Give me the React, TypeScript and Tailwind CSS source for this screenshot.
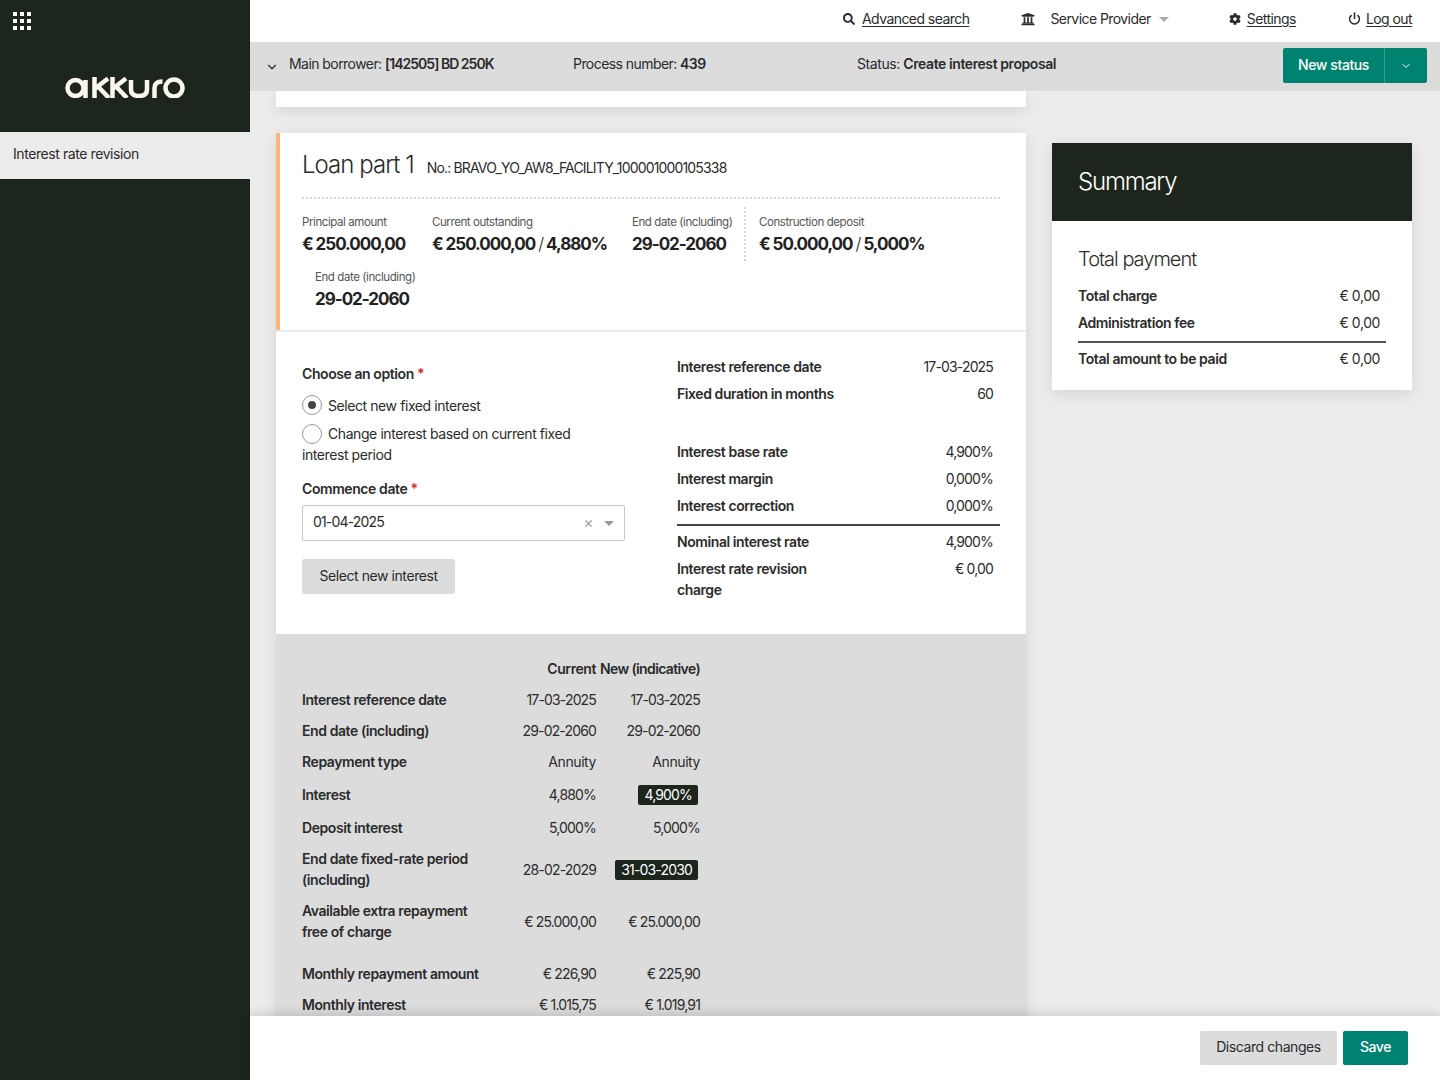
import React from "react";
import { ChevronDown, Power, X } from "lucide-react";
import { FaUniversity, FaCog, FaSearch } from "react-icons/fa";

const Logo = () => (
  <svg width="120" height="21" viewBox="0 0 120 21" fill="none" stroke="#fbf6ee" strokeWidth="4.5">
    <circle cx="10.500" cy="11" r="8" />
    <path d="M20.500 3v18" />
    <path d="M29.500 0v21M29.500 12 43 1.500M33 9.500 44 21" />
    <path d="M47.500 0v21M47.500 12 61 1.500M51 9.500 62 21" />
    <path d="M66 3v9.500c0 4.500 2.500 6.500 8 6.500s8-2 8-6.500V3" />
    <path d="M89.500 21V11c0-4.500 2.500-6.500 8-6.500" />
    <circle cx="109" cy="11" r="8.500" />
  </svg>
);

const MenuDots = () => (
  <div className="grid grid-cols-3 gap-[3px] w-[18px]">
    {Array.from({ length: 9 }).map((_, i) => (
      <span key={i} className="w-[4px] h-[4px] bg-white" />
    ))}
  </div>
);

const Stat = ({ label, children, className = "" }: { label: string; children: React.ReactNode; className?: string }) => (
  <div className={className}>
    <div className="text-[11.5px] leading-[16px] text-[#555]">{label}</div>
    <div className="text-[17px] leading-[24px] mt-[2px] font-bold text-[#222] whitespace-nowrap tracking-[-0.06em]">{children}</div>
  </div>
);

const Row = ({ label, value, className = "" }: { label: string; value: string; className?: string }) => (
  <div className={`flex justify-between pr-[7px] leading-[21px] mb-[6px] ${className}`}>
    <span className="font-semibold w-[160px]">{label}</span>
    <span className="tracking-[-0.06em]">{value}</span>
  </div>
);

const compare: [string, string, string, string?][] = [
  ["Interest reference date", "17-03-2025", "17-03-2025"],
  ["End date (including)", "29-02-2060", "29-02-2060"],
  ["Repayment type", "Annuity", "Annuity"],
  ["Interest", "4,880%", "4,900%", "h-[35px]"],
  ["Deposit interest", "5,000%", "5,000%"],
  ["End date fixed-rate period (including)", "28-02-2029", "31-03-2030", "h-[52px]"],
  ["Available extra repayment free of charge", "€ 25.000,00", "€ 25.000,00", "h-[52px]"],
  ["Monthly repayment amount", "€ 226,90", "€ 225,90", "h-[42px] [&>td]:pt-[11px]"],
  ["Monthly interest", "€ 1.015,75", "€ 1.019,91"],
];

export default function App() {
  return (
    <div
      className="flex h-screen overflow-hidden bg-[#ececec] text-[14px] text-[#2b2b2b] tracking-[-0.03em]"
      style={{ fontFamily: '"Inter", "Liberation Sans", sans-serif' }}
    >
      <aside className="w-[250px] shrink-0 bg-[#1c261c]">
        <div className="h-[132px] pl-[13px] pt-[12px]">
          <MenuDots />
          <div className="pl-[52px] mt-[47px]">
            <Logo />
          </div>
        </div>
        <div className="h-[47px] bg-[#ececec] pl-[13px] leading-[44px]">Interest rate revision</div>
      </aside>

      <div className="flex-1 flex flex-col min-w-0">
        <header className="h-[42px] bg-white flex items-center shrink-0 pb-[5px] tracking-[-0.04em]">
          <div className="flex items-center gap-[7px] ml-[593px]">
            <FaSearch size={12} />
            <span className="underline underline-offset-2">Advanced search</span>
          </div>
          <div className="flex items-center ml-[52px]">
            <FaUniversity size={14} />
            <span className="ml-[15px]">Service Provider</span>
            <span className="ml-[8px] mt-[2px] border-x-[5px] border-x-transparent border-t-[5px] border-t-[#aaa]" />
          </div>
          <div className="flex items-center gap-[6px] ml-[60px]">
            <FaCog size={12} />
            <span className="underline underline-offset-2">Settings</span>
          </div>
          <div className="flex items-center gap-[5px] ml-[52px]">
            <Power size={13} strokeWidth={3} />
            <span className="underline underline-offset-2">Log out</span>
          </div>
        </header>

        <div className="h-[49px] bg-[#dcdcdc] flex items-center shrink-0 relative z-10 pl-[15px] pb-[2px]">
          <ChevronDown size={14} strokeWidth={2} className="mt-[2px]" />
          <span className="ml-[10px] w-[284px] pb-[5px] tracking-[-0.04em]">
            Main borrower: <b className="font-semibold tracking-[-0.07em]">[142505] BD 250K</b>
          </span>
          <span className="w-[284px] pb-[5px] tracking-[-0.04em]">
            Process number: <b className="font-semibold">439</b>
          </span>
          <span className="pb-[5px]">
            Status: <b className="font-semibold">Create interest proposal</b>
          </span>
          <div className="ml-auto mr-[13px] flex h-[35px] bg-[#008270] rounded-[2px] text-white">
            <span className="w-[102px] flex items-center justify-center border-r border-[#3a9c8e] font-medium pb-[3px]">New status</span>
            <span className="w-[42px] flex items-center justify-center">
              <ChevronDown size={12} strokeWidth={2} />
            </span>
          </div>
        </div>

        <main className="flex-1 min-h-0 overflow-hidden flex gap-[26px] px-[26px] items-start">
          <div className="w-[750px] shrink-0">
            <div className="h-[16px] bg-white shadow-[0_4px_14px_rgba(0,0,0,0.1)]" />

            <section className="mt-[26px] shadow-[0_4px_14px_rgba(0,0,0,0.1)]">
              <div className="h-[197px] bg-white border-l-4 border-[#ffb374] pl-[22px] pr-[26px]">
                <div className="flex items-baseline h-[66px] border-b-2 border-dotted border-[#d5d5d5] pt-[14px]">
                  <h2 className="text-[24px] font-light tracking-[-0.04em]">Loan part 1</h2>
                  <span className="ml-[13px] tracking-[-0.06em]">No.: BRAVO_YO_AW8_FACILITY_100001000105338</span>
                </div>
                <div className="flex pt-[8px]">
                  <Stat label="Principal amount" className="w-[130px] pt-[7px]">€ 250.000,00</Stat>
                  <Stat label="Current outstanding" className="w-[200px] pt-[7px]">
                    € 250.000,00 <span className="font-light">/</span> 4,880%
                  </Stat>
                  <Stat label="End date (including)" className="w-[114px] h-[54px] pt-[7px] border-r-2 border-dotted border-[#d5d5d5]">29-02-2060</Stat>
                  <Stat label="Construction deposit" className="pl-[13px] pt-[7px]">
                    € 50.000,00 <span className="font-light">/</span> 5,000%
                  </Stat>
                </div>
                <Stat label="End date (including)" className="ml-[13px] mt-[8px]">29-02-2060</Stat>
              </div>

              <div className="mt-[2px] h-[302px] bg-white pl-[26px] pr-[26px] pt-[24px] flex">
                <div className="w-[323px] shrink-0 pt-[3px]">
                  <div className="font-semibold leading-[30px]">
                    Choose an option <span className="text-[#d42a2a]">*</span>
                  </div>
                  <label className="flex items-center gap-[6px] mt-[1px] h-[30px]">
                    <span className="w-[20px] h-[20px] rounded-full border border-[#999] flex items-center justify-center">
                      <span className="w-[8px] h-[8px] rounded-full bg-[#444]" />
                    </span>
                    Select new fixed interest
                  </label>
                  <div className="leading-[21px] mt-[3px] w-[280px]">
                    <span className="inline-block align-[-5px] w-[20px] h-[20px] rounded-full border border-[#999] mr-[6px] bg-white" />
                    Change interest based on current fixed interest period
                  </div>
                  <div className="font-semibold leading-[21px] mt-[13px]">
                    Commence date <span className="text-[#d42a2a]">*</span>
                  </div>
                  <div className="mt-[6px] h-[36px] border border-[#c8c8c8] rounded-[2px] flex items-center pl-[10px] pr-[10px]">
                    <span className="flex-1 pb-[3px] tracking-[-0.06em]">01-04-2025</span>
                    <X size={11} strokeWidth={2.5} className="text-[#999]" />
                    <span className="ml-[10px] border-x-[5px] border-x-transparent border-t-[5px] border-t-[#999]" />
                  </div>
                  <button className="mt-[18px] h-[35px] w-[153px] bg-[#dcdcdc] rounded-[2px] pb-[3px]">Select new interest</button>
                </div>
                <div className="ml-[52px] flex-1">
                  <Row label="Interest reference date" value="17-03-2025" />
                  <Row label="Fixed duration in months" value="60" className="mb-[37px]" />
                  <Row label="Interest base rate" value="4,900%" />
                  <Row label="Interest margin" value="0,000%" />
                  <Row label="Interest correction" value="0,000%" className="mb-[8px]" />
                  <div className="border-t-2 border-[#444] mb-[5px]" />
                  <Row label="Nominal interest rate" value="4,900%" />
                  <Row label="Interest rate revision charge" value="€ 0,00" />
                </div>
              </div>

              <div className="bg-[#dcdcdc] pl-[26px] pt-[19px] h-[420px]">
                <table className="border-collapse">
                  <thead>
                    <tr className="h-[31px] font-semibold">
                      <th className="w-[190px]" />
                      <th className="w-[104px] text-right font-semibold">Current</th>
                      <th className="w-[104px] text-right font-semibold whitespace-nowrap tracking-[-0.045em]">New (indicative)</th>
                    </tr>
                  </thead>
                  <tbody>
                    {compare.map(([label, current, next, cls]) => (
                      <tr key={label} className={cls ?? "h-[31px]"}>
                        <td className="font-semibold leading-[21px] pr-[8px]">{label}</td>
                        <td className={current === "Annuity" ? "text-right" : "text-right tracking-[-0.06em]"}>{current}</td>
                        <td className={next === "Annuity" ? "text-right" : "text-right tracking-[-0.06em]"}>
                          {label === "Interest" || label.startsWith("End date fixed") ? (
                            <span className="inline-block bg-[#1c261c] text-white rounded-[2px] px-[6px] leading-[20px] mr-[2px]">{next}</span>
                          ) : (
                            next
                          )}
                        </td>
                      </tr>
                    ))}
                  </tbody>
                </table>
              </div>
            </section>
          </div>

          <aside className="w-[360px] mt-[52px] bg-white shadow-[0_4px_14px_rgba(0,0,0,0.1)]">
            <div className="h-[78px] bg-[#1c261c] text-white text-[24px] font-light pl-[26px] leading-[78px] tracking-[-0.05em]">Summary</div>
            <div className="h-[169px] px-[26px] pt-[24px]">
              <h3 className="text-[20px] font-light leading-[28px] tracking-[-0.05em]">Total payment</h3>
              <div className="flex justify-between pr-[6px] mt-[12px] leading-[21px]">
                <span className="font-semibold">Total charge</span>
                <span>€ 0,00</span>
              </div>
              <div className="flex justify-between pr-[6px] mt-[6px] leading-[21px]">
                <span className="font-semibold">Administration fee</span>
                <span>€ 0,00</span>
              </div>
              <div className="border-t-2 border-[#555] mt-[8px]" />
              <div className="flex justify-between pr-[6px] mt-[5px] leading-[21px]">
                <span className="font-semibold">Total amount to be paid</span>
                <span>€ 0,00</span>
              </div>
            </div>
          </aside>
        </main>

        <footer className="h-[64px] shrink-0 bg-white relative z-10 shadow-[0_-2px_10px_rgba(0,0,0,0.15)] flex items-center justify-end gap-[6px] pr-[32px]">
          <button className="h-[34px] w-[137px] bg-[#dcdcdc] rounded-[2px] pb-[3px]">Discard changes</button>
          <button className="h-[34px] w-[65px] bg-[#008270] text-white rounded-[2px] font-medium pb-[3px]">Save</button>
        </footer>
      </div>
    </div>
  );
}
